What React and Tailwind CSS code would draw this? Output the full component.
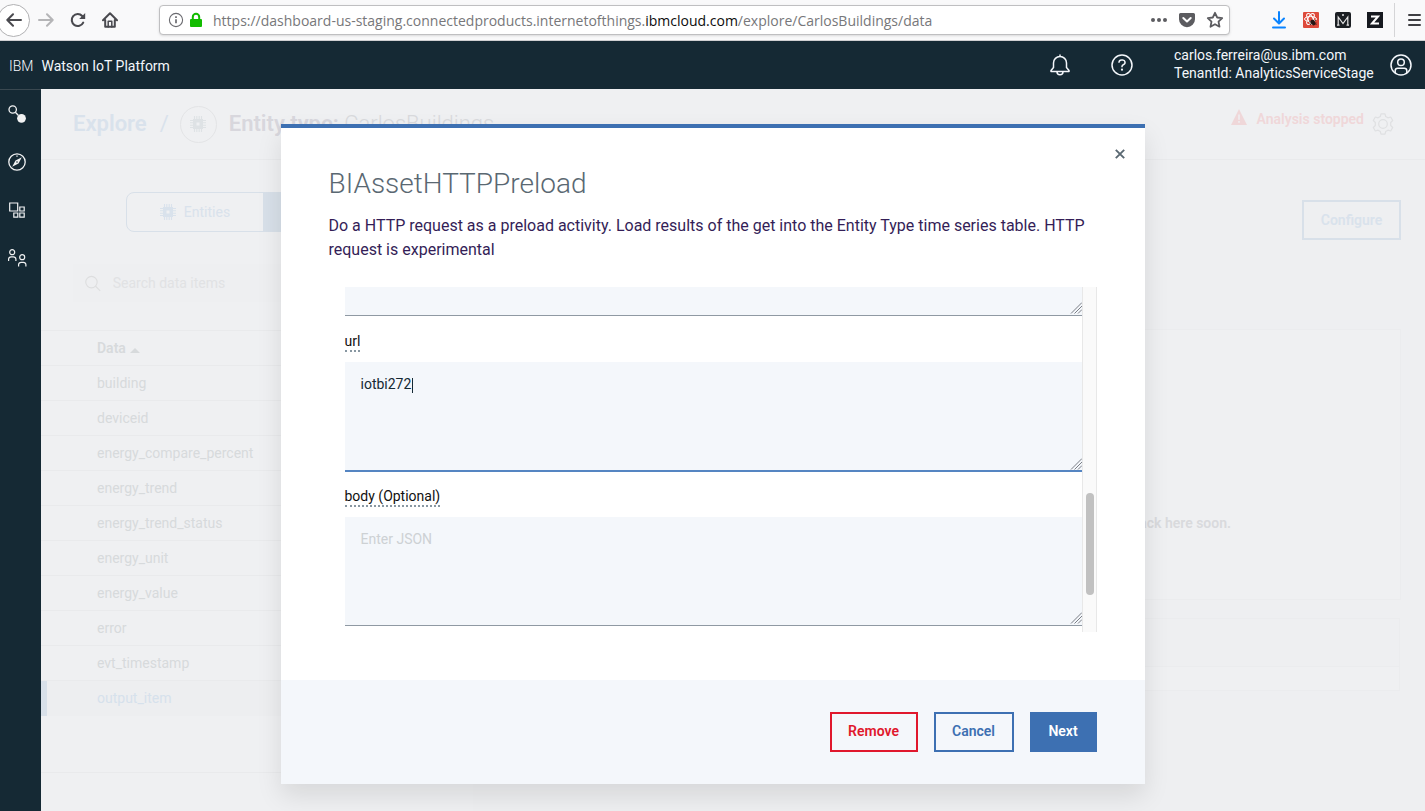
import React from "react";

const items = [
  "building",
  "deviceid",
  "energy_compare_percent",
  "energy_trend",
  "energy_trend_status",
  "energy_unit",
  "energy_value",
  "error",
  "evt_timestamp",
  "output_item",
];

function Chip({ className }) {
  return (
    <svg viewBox="0 0 16 16" className={className} fill="none" stroke="currentColor" aria-hidden="true">
      <path d="M3 3h10v10H3zM6.500 6.500v3h3v-3z" fill="currentColor" fillRule="evenodd" stroke="none" />
      <path d="M4.500 0v3M6.800 0v3M9.200 0v3M11.500 0v3M4.500 13v3M6.800 13v3M9.200 13v3M11.500 13v3M0 4.500h3M0 6.800h3M0 9.200h3M0 11.500h3M13 4.500h3M13 6.800h3M13 9.200h3M13 11.500h3" strokeWidth="1.100" />
    </svg>
  );
}

function BrowserBar() {
  return (
    <div className="flex h-[41px] items-center border-b border-[#cfcfd1] bg-[#f9f9fa] text-[#4a4a4f]">
      <button aria-label="Back" className="-ml-[3px] flex size-[33px] items-center justify-center rounded-full border border-[#b1b1b3] bg-white">
        <svg width="16" height="16" viewBox="0 0 16 16" fill="none" stroke="currentColor" strokeWidth="2" strokeLinecap="round" strokeLinejoin="round">
          <path d="M15 8H1.5M7 2.2 1.3 8 7 13.8" />
        </svg>
      </button>
      <button aria-label="Forward" className="ml-2 text-[#b5b5b7]">
        <svg width="16" height="16" viewBox="0 0 16 16" fill="none" stroke="currentColor" strokeWidth="2" strokeLinecap="round" strokeLinejoin="round">
          <path d="M1 8h13.5M9 2.2 14.7 8 9 13.8" />
        </svg>
      </button>
      <button aria-label="Reload" className="ml-4">
        <svg width="16" height="16" viewBox="0 0 16 16" fill="none" stroke="currentColor" strokeWidth="2.1">
          <path d="M13.2 10.6A6 6 0 1 1 12.2 4" strokeLinecap="round" />
          <path d="M15.2 1v6H9.2z" fill="currentColor" stroke="none" />
        </svg>
      </button>
      <button aria-label="Home" className="ml-4">
        <svg width="16" height="16" viewBox="0 0 16 16" fill="none" stroke="currentColor" strokeWidth="2" strokeLinejoin="round" strokeLinecap="round">
          <path d="M1 8.2 8 1.3l7 6.9M3.2 8v6.8h9.6V8" />
          <path d="M6.2 15V9.3h3.6V15" strokeWidth="1.5" />
        </svg>
      </button>
      <div className="ml-[41px] flex h-[30px] flex-1 items-center rounded border border-[#bfbfc1] bg-white px-2 shadow-sm">
        <svg width="16" height="16" viewBox="0 0 16 16" fill="none" stroke="#6b6b70" className="shrink-0">
          <circle cx="8" cy="8" r="6.6" strokeWidth="1.1" />
          <path d="M8 7.2v4M8 4.2v1.7" strokeWidth="1.7" />
        </svg>
        <svg width="14" height="16" viewBox="0 0 14 16" className="ml-[5px] shrink-0">
          <rect x="1" y="7" width="12" height="8" rx="1" fill="#12bc00" />
          <path d="M3.8 8V5a3.2 3.2 0 0 1 6.4 0v3" fill="none" stroke="#12bc00" strokeWidth="2" />
        </svg>
        <div className="ml-[10px] flex-1 whitespace-nowrap pt-px font-['Open_Sans',sans-serif] text-sm text-[#77777a]">
          https://dashboard-us-staging.connectedproducts.internetofthings.<span className="text-[#0c0c0d]">ibmcloud.com</span>/explore/CarlosBuildings/data
        </div>
        <button aria-label="Page actions">
          <svg width="18" height="16" viewBox="0 0 18 16" fill="#5c5c60">
            <circle cx="3" cy="8" r="2" />
            <circle cx="9" cy="8" r="2" />
            <circle cx="15" cy="8" r="2" />
          </svg>
        </button>
        <button aria-label="Save to Pocket" className="ml-[10px]">
          <svg width="18" height="16" viewBox="0 0 18 16">
            <path d="M2.5 1h13A1.5 1.5 0 0 1 17 2.500v4.700a8 8 0 0 1-16 0V2.500A1.500 1.500 0 0 1 2.500 1z" fill="#5c5c60" />
            <path d="M5.300 6 9 9.500 12.700 6" fill="none" stroke="#fff" strokeWidth="2" strokeLinecap="round" strokeLinejoin="round" />
          </svg>
        </button>
        <button aria-label="Bookmark" className="ml-[10px] -mr-[3px]">
          <svg width="18" height="18" viewBox="0 0 18 18" fill="none" stroke="#5c5c60" strokeWidth="1.8" strokeLinejoin="round">
            <path d="m9 1.800 2.200 4.700 5 .600-3.700 3.500 1 5.100L9 13.200l-4.500 2.500 1-5.100L1.800 7.100l5-.600z" />
          </svg>
        </button>
      </div>
      <div className="ml-[41px] flex items-center gap-4">
        <button aria-label="Downloads">
          <svg width="16" height="18" viewBox="0 0 16 18" fill="none" stroke="#0a84ff" strokeWidth="2">
            <path d="M8 1v11M3 7.500 8 12.500l5-5M2 16.500h12" strokeLinecap="round" strokeLinejoin="round" />
          </svg>
        </button>
        <button aria-label="React extension">
          <svg width="16" height="16" viewBox="0 0 16 16">
            <rect width="16" height="16" rx="1" fill="#de4a3b" />
            <g fill="none" stroke="#fff" strokeWidth="1">
              <ellipse cx="7.500" cy="7" rx="6" ry="2.500" />
              <ellipse cx="7.500" cy="7" rx="6" ry="2.500" transform="rotate(60 7.500 7)" />
              <ellipse cx="7.500" cy="7" rx="6" ry="2.500" transform="rotate(120 7.500 7)" />
            </g>
            <ellipse cx="10" cy="10.500" rx="2" ry="3" fill="#2a1715" transform="rotate(-25 10 10.500)" />
            <path d="M6 9l7.500 3.500M7 13l6-5M6.500 11h7" stroke="#2a1715" strokeWidth=".8" />
          </svg>
        </button>
        <button aria-label="M extension" className="flex size-4 items-center justify-center rounded-[2px] bg-[#1b1f23]">
          <svg width="14" height="14" viewBox="0 0 14 14" fill="none" stroke="#e4e4e4">
            <path d="M2.200 12V4L7 10.500 11.800 4v8M1 12.200h2.500M10.500 12.200H13" strokeWidth="1.200" />
            <circle cx="7" cy="2" r="1" fill="#e4e4e4" stroke="none" />
          </svg>
        </button>
        <button aria-label="Z extension" className="flex size-4 items-center justify-center bg-[#16191f]">
          <svg width="10" height="10" viewBox="0 0 10 10" fill="none" stroke="#fff" strokeWidth="2">
            <path d="M1 1.500h7L2 8.500h7" />
          </svg>
        </button>
      </div>
      <div className="ml-[11px] h-[34px] border-l border-[#d5d5d7]" />
      <button aria-label="Menu" className="mx-[13px] mr-[4px]">
        <svg width="13" height="14" viewBox="0 0 13 14" stroke="#3f3f43" strokeWidth="2" strokeLinecap="round">
          <path d="M1 2h11M1 7h11M1 12h11" />
        </svg>
      </button>
    </div>
  );
}

function AppHeader() {
  return (
    <header className="flex h-12 items-center bg-[#152934] text-sm text-[#f4f7fb]">
      <div className="ml-[9px] flex gap-2 pt-[2px]">
        <span className="font-light">IBM</span>
        <span>Watson IoT Platform</span>
      </div>
      <button aria-label="Notifications" className="ml-auto">
        <svg width="24" height="24" viewBox="0 0 24 24" fill="none" stroke="currentColor" strokeWidth="1.500" strokeLinejoin="round">
          <path d="M12 1.500v2M5.500 10a6.500 6.500 0 0 1 13 0v4.500l2.500 3v1H3v-1l2.500-3z" />
          <path d="M9 18.800a3 3 0 0 0 6 0" />
        </svg>
      </button>
      <button aria-label="Help" className="ml-[38px]">
        <svg width="24" height="24" viewBox="0 0 24 24" fill="none" stroke="currentColor" strokeWidth="1.500">
          <circle cx="12" cy="12" r="10" />
          <path d="M9 9.800V9.300a2.500 2.500 0 0 1 2.500-2.300h1a2.400 2.400 0 0 1 .8 4.700c-.9.400-1.300.900-1.300 1.800v.7" />
          <circle cx="12" cy="16.700" r="1.100" fill="currentColor" stroke="none" />
        </svg>
      </button>
      <div className="ml-10 w-[204px] pb-[2px] leading-[18px]">
        <div>carlos.ferreira@us.ibm.com</div>
        <div>TenantId: AnalyticsServiceStage</div>
      </div>
      <button aria-label="Account" className="ml-[11px] mr-3">
        <svg width="24" height="24" viewBox="0 0 24 24" fill="none" stroke="currentColor" strokeWidth="1.500">
          <circle cx="12" cy="12" r="10" />
          <circle cx="12" cy="9.300" r="3.300" />
          <path d="M6.200 20v-2.200a2.500 2.500 0 0 1 2.500-2.500h6.600a2.500 2.500 0 0 1 2.500 2.500V20" />
        </svg>
      </button>
    </header>
  );
}

function Sidebar() {
  return (
    <nav className="flex w-[41px] shrink-0 flex-col border-t border-[#3a4850] bg-[#152934] text-[#f1f2f3]">
      <a href="#overview" aria-label="Overview" className="flex h-12 items-center pl-2">
        <svg width="18" height="18" viewBox="0 0 18 18" fill="none" stroke="currentColor" strokeWidth="1.300">
          <circle cx="4.700" cy="4.500" r="3.700" />
          <path d="m7.300 7.200 3 3" />
          <circle cx="13.500" cy="13.300" r="4.400" fill="currentColor" stroke="none" />
        </svg>
      </a>
      <a href="#explore" aria-label="Explore" className="flex h-12 items-center pl-2">
        <svg width="18" height="18" viewBox="0 0 18 18" fill="none" stroke="currentColor" strokeWidth="1.300">
          <circle cx="9" cy="9" r="8.200" />
          <path d="M13.800 4.200 10.500 10.500 4.200 13.800 7.500 7.500z" fill="currentColor" stroke="none" />
          <circle cx="9" cy="9" r=".8" fill="#152934" stroke="none" />
          <path d="M9 2.500v1.200" />
        </svg>
      </a>
      <a href="#apps" aria-label="Applications" className="flex h-12 items-center pl-2">
        <svg width="18" height="18" viewBox="0 0 18 18" fill="none" stroke="currentColor" strokeWidth="1.200">
          <path d="M1.700 2h8v8h-8zM11.800 6h4.400v4h-4.400zM5.800 12h4v4.200h-4zM11.800 12h4.400v4.200h-4.400z" />
        </svg>
      </a>
      <a href="#members" aria-label="Members" className="flex h-12 items-center pl-2">
        <svg width="19" height="18" viewBox="0 0 19 18" fill="none" stroke="currentColor" strokeWidth="1.200">
          <circle cx="4.200" cy="3.200" r="2.500" />
          <path d="M.6 12V10a2.500 2.500 0 0 1 2.500-2.200h2.300A2.500 2.500 0 0 1 7.900 10v2" />
          <circle cx="14.200" cy="8.200" r="2.500" />
          <path d="M10.600 17.500v-2a2.500 2.500 0 0 1 2.500-2.200h2.300a2.500 2.500 0 0 1 2.500 2.200v2" />
        </svg>
      </a>
    </nav>
  );
}

function EntityPage() {
  return (
    <main className="flex min-w-0 flex-1 flex-col bg-[#eeeff1]">
      <div className="flex h-[71px] items-center border-b border-[#e9eaec] bg-[#eff0f2] pl-8 text-[22px]">
        <a href="#explore" className="pb-[2px] font-semibold text-[#d9e2ec]">Explore</a>
        <span className="ml-[13px] pb-[2px] text-[#d9e2ec]">/</span>
        <span className="ml-[11px] flex size-[37px] items-center justify-center rounded-full border border-[#e3e4e6] text-[#dee2e5]">
          <Chip className="size-4" />
        </span>
        <h1 className="ml-3 pb-[2px] font-light text-[#d9dadd]">
          <span className="font-semibold text-[#d8d7dd]">Entity type:</span> CarlosBuildings
        </h1>
        <div className="ml-auto mr-[31px] flex items-center text-sm font-semibold text-[#efd7d9]">
          <div className="flex items-center gap-[10px] pb-[10px]">
            <svg width="16" height="16" viewBox="0 0 16 16" className="mb-1">
              <path d="M8 0 16 16H0z" fill="currentColor" />
              <path d="M8 5.500v5.200M8 12v1.800" stroke="#eff0f2" strokeWidth="1.500" />
            </svg>
            <span>Analysis stopped</span>
          </div>
          <button aria-label="Settings" className="ml-2 text-[#dfe0e2]">
            <svg width="22" height="22" viewBox="0 0 22 22" fill="none" stroke="currentColor" strokeWidth="1.200" strokeLinejoin="round">
              <circle cx="11" cy="11" r="4.300" />
              <path d="M9 .8h4l.7 2.700 2.200 1.300 2.800-.8 2 3.500-2 2v3l2 2-2 3.500-2.800-.8-2.200 1.300-.7 2.700H9l-.7-2.700-2.200-1.300-2.800.8-2-3.500 2-2v-3l-2-2 2-3.500 2.800.8 2.200-1.300z" />
            </svg>
          </button>
        </div>
      </div>
      <div className="flex flex-1">
        <section className="w-[432px] shrink-0 bg-[#eff0f2] text-sm">
          <div className="mx-[85px] mt-8 flex h-10 overflow-hidden rounded-lg border border-[#d8e0e9] text-[#d9e2ec]">
            <button className="flex w-[136px] items-center justify-center gap-2">
              <Chip className="size-4" />
              Entities
            </button>
            <button aria-label="Data items" className="flex-1 bg-[#d8e0e9]" />
          </div>
          <label className="mx-8 mt-8 flex h-[38px] items-center gap-3 bg-[#eeeff1] pl-3 text-[#dddedf]">
            <svg width="17" height="17" viewBox="0 0 17 17" fill="none" stroke="currentColor" strokeWidth="1.200">
              <circle cx="7" cy="7" r="6.200" />
              <path d="m11.500 11.500 5 5" />
            </svg>
            <input aria-label="Search data items" placeholder="Search data items" className="w-full bg-transparent placeholder:text-[#e1e2e4]" />
          </label>
          <table className="mt-7 w-full border-separate border-spacing-0 text-left text-[#d7dadc]">
            <thead>
              <tr>
                <th className="h-9 border-y border-[#e9eaec] p-0 pl-14 font-semibold">
                  <span className="flex items-center gap-1">
                    Data
                    <svg width="10" height="5" viewBox="0 0 10 5" className="mt-1" fill="currentColor">
                      <path d="M5 0 10 5H0z" />
                    </svg>
                  </span>
                </th>
              </tr>
            </thead>
            <tbody>
              {items.map((name) => (
                <tr key={name}>
                  <td
                    className={
                      name === "output_item"
                        ? "h-[35px] border-l-[6px] border-[#d8e0e9] bg-[#edeef0] p-0 pb-px pl-[50px] text-[#d6e1ec]"
                        : "h-[35px] border-b border-[#e9eaec] p-0 pl-14"
                    }
                  >
                    {name}
                  </td>
                </tr>
              ))}
            </tbody>
          </table>
          <div className="mt-14 border-t border-[#e9eaec]" />
        </section>
        <section className="flex min-w-0 flex-1 flex-col pl-8 pr-6 pt-10 text-sm">
          <button className="h-10 w-[99px] self-end border-2 border-[#d8e0e9] pb-px font-semibold text-[#d9e2ec]">Configure</button>
          <div className="mt-[89px] flex h-[271px] items-end justify-end border border-[#ebecee] bg-[#eff0f2] pb-[66px] pr-[169px] font-semibold text-[#d9dadd]">
            Check back here soon.
          </div>
          <div className="mr-px mt-[18px] h-[49px] border border-[#ebecee] bg-[#eeeff1]" />
          <div className="mr-px h-6 border border-t-0 border-[#ebecee] bg-[#eff0f2]" />
        </section>
      </div>
    </main>
  );
}

function ResizeGrip() {
  return (
    <svg width="12" height="12" viewBox="0 0 12 12" className="pointer-events-none absolute bottom-[2px] right-0" fill="none" stroke="#7b7f86" strokeWidth="1">
      <path d="M1 11.500 12 .5M4.500 11.500l7.500-7.500M8 11.500l4-4" />
    </svg>
  );
}

function Field({ id, label, value, placeholder, focused }) {
  return (
    <div className="shrink-0">
      {label && (
        <div className="mt-4 flex h-[30px]">
          <label htmlFor={id} className="h-5 border-b-2 border-dotted border-[#8897a2] text-sm leading-[18px] text-[#111]">
            {label}
          </label>
        </div>
      )}
      <div className="relative">
        <textarea
          id={id}
          aria-label={label || "headers"}
          defaultValue={value}
          placeholder={placeholder}
          className={
            focused
              ? "block h-[110px] w-full resize-none border-b-2 border-[#5585c2] bg-[#f4f7fb] px-4 py-3 text-sm text-[#152934] outline-none -mb-px"
              : "block h-[109px] w-full resize-none border-b border-[#8f99a3] bg-[#f4f7fb] px-4 py-3 text-sm text-[#152934] outline-none placeholder:text-[#cdd1d4]"
          }
        />
        {focused && <span className="absolute left-[67px] top-4 h-[15px] w-px bg-[#152934]" />}
        <ResizeGrip />
      </div>
    </div>
  );
}

function FunctionDialog() {
  return (
    <div className="absolute inset-0 flex items-start justify-center pt-[35px]">
      <div role="dialog" aria-labelledby="dialog-title" className="flex w-[864px] max-w-full flex-col border-t-4 border-[#3d70b2] bg-white shadow-[0_12px_24px_0_rgba(0,0,0,0.1)]">
        <div className="flex flex-col px-12 pt-5">
          <button aria-label="Close" className="-mr-7 self-end text-[#5a6872]">
            <svg width="10" height="12" viewBox="0 0 10 12" fill="none" stroke="currentColor" strokeWidth="1.900">
              <path d="m.8 1.800 8.400 8.400M9.200 1.800.8 10.200" />
            </svg>
          </button>
          <h2 id="dialog-title" className="mt-[6px] text-[28px] font-light leading-9 text-[#5a6872]">
            BIAssetHTTPPreload
          </h2>
          <p className="mt-3 text-base leading-6 text-[#341e57]">
            Do a HTTP request as a preload activity. Load results of the get into the Entity Type time series table. HTTP request is experimental
          </p>
        </div>
        <div className="mx-12 mt-[25px] flex h-[345px]">
          <div className="flex min-w-0 flex-1 flex-col justify-end overflow-hidden pb-[6px] pl-4">
            <Field id="headers" />
            <Field id="url" label="url" value="iotbi272" focused />
            <Field id="body" label="body (Optional)" placeholder="Enter JSON" />
          </div>
          <div className="flex w-[15px] flex-col border-x border-[#e8e8e8] bg-[#fafafa] pl-[3px] pt-[206px]">
            <div className="h-[102px] w-2 rounded-full bg-[#c1c1c1]" />
          </div>
        </div>
        <div className="mt-12 flex justify-end gap-4 bg-[#f4f7fb] px-12 py-8 text-sm font-semibold">
          <button className="h-10 w-[88px] border-2 border-[#e0182d] pb-[2px] text-[#e0182d]">Remove</button>
          <button className="h-10 w-20 border-2 border-[#3d70b2] pb-[2px] text-[#3d70b2]">Cancel</button>
          <button className="h-10 w-[67px] bg-[#3d70b2] pb-[2px] text-white">Next</button>
        </div>
      </div>
    </div>
  );
}

export default function App() {
  return (
    <div className="flex min-h-screen flex-col font-[Roboto,sans-serif]">
      <BrowserBar />
      <AppHeader />
      <div className="relative flex flex-1">
        <Sidebar />
        <EntityPage />
        <FunctionDialog />
      </div>
    </div>
  );
}
